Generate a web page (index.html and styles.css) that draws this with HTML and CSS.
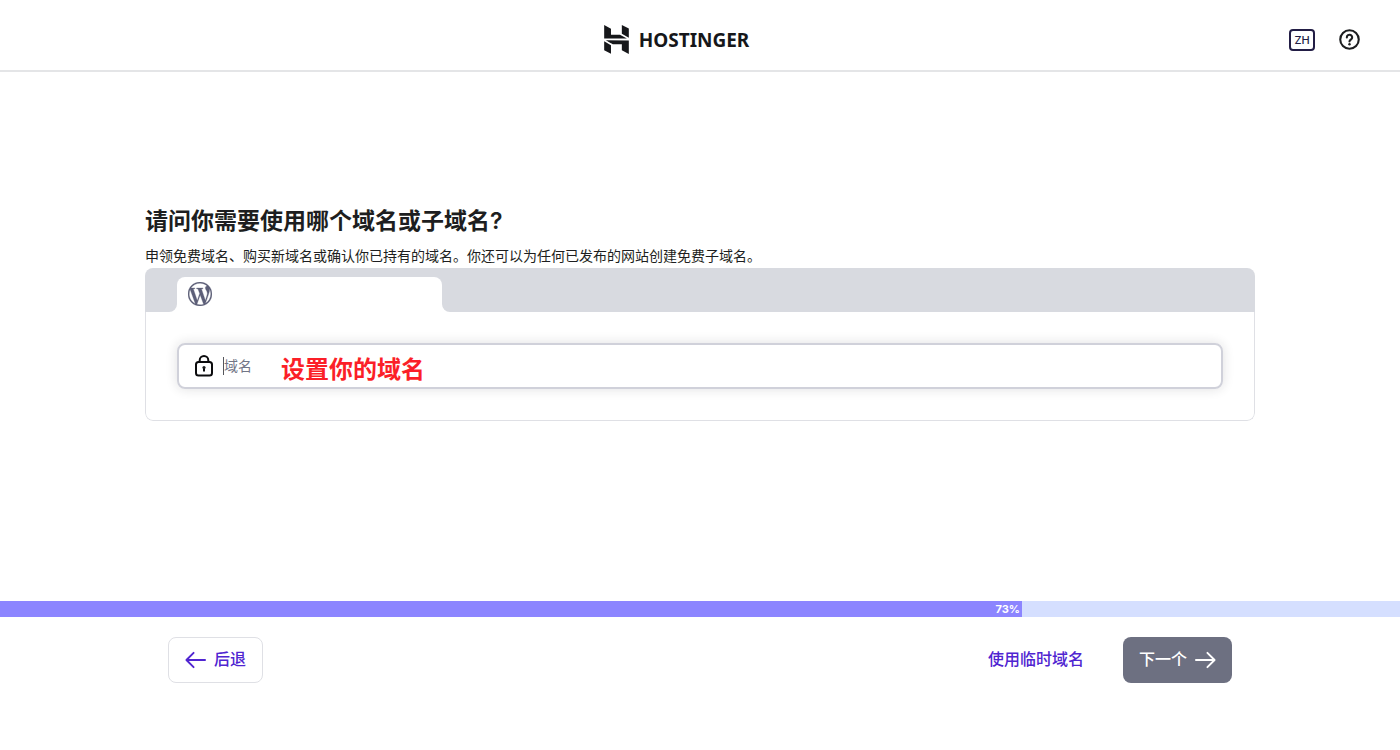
FILE: index.html
```html
<!DOCTYPE html>
<html lang="zh">
<head>
    <meta charset="UTF-8">
    <meta name="viewport" content="width=device-width, initial-scale=1.0">
    <title>Hostinger</title>
    <link rel="stylesheet" href="styles.css">
</head>
<body>
    <header class="header">
        <div class="header-logo">
            <a href="#" class="logo">
                <svg class="logo-mark" viewBox="1.8 0 20.4 24" aria-hidden="true">
                    <path d="M16.415 0v7.16l5.785 3.384V2.949L16.415 0ZM1.8 0v11.237h18.815L14.89 8.09l-7.457-.003V3.024L1.8 0Zm14.615 20.894v-5.019l-7.514-.005c.007.033-5.82-3.197-5.82-3.197l19.119.091V24l-5.785-3.106ZM1.8 13.551v7.343l5.633 2.949v-6.988L1.8 13.551Z"/>
                </svg>
                <span>HOSTINGER</span>
            </a>
        </div>
        <div class="header-tools">
            <button type="button" class="lang">ZH</button>
            <button type="button" class="help" aria-label="帮助">
                <svg viewBox="0 0 22 22" aria-hidden="true">
                    <circle cx="11" cy="11" r="9.7"/>
                    <path d="M8.2 8.8a2.8 2.7 0 1 1 4.5 2.1c-1 .8-1.7 1.2-1.7 2.2"/>
                    <circle class="dot" cx="11" cy="16" r="1.3"/>
                </svg>
            </button>
        </div>
    </header>

    <main class="main">
        <h1 class="title">请问你需要使用哪个域名或子域名?</h1>
        <p class="desc">申领免费域名、购买新域名或确认你已持有的域名。你还可以为任何已发布的网站创建免费子域名。</p>
        <div class="browser">
            <!-- tab bar -->
            <div class="tabs">
                <div class="tabs-left"></div>
                <div class="tab-wrap">
                    <div class="tab">
                        <svg class="wp" viewBox="0 0 24 24" aria-hidden="true">
                            <path d="M21.469 6.825c.84 1.537 1.318 3.3 1.318 5.175 0 3.979-2.156 7.456-5.363 9.325l3.295-9.527c.615-1.54.82-2.771.82-3.864 0-.405-.026-.78-.07-1.11m-7.981.105c.647-.03 1.232-.105 1.232-.105.582-.075.514-.93-.067-.899 0 0-1.755.135-2.88.135-1.064 0-2.85-.15-2.85-.15-.585-.03-.661.855-.075.885 0 0 .54.061 1.125.09l1.68 4.605-2.37 7.08L5.354 6.9c.649-.03 1.234-.1 1.234-.1.585-.075.516-.93-.065-.896 0 0-1.746.138-2.874.138-.2 0-.438-.008-.69-.015C4.911 3.15 8.235 1.215 12 1.215c2.809 0 5.365 1.072 7.286 2.833-.046-.003-.091-.009-.141-.009-1.06 0-1.812.923-1.812 1.914 0 .89.513 1.643 1.06 2.531.411.72.89 1.643.89 2.977 0 .915-.354 1.994-.821 3.479l-1.075 3.585-3.9-11.61.001.014zM12 22.784c-1.059 0-2.081-.153-3.048-.437l3.237-9.406 3.315 9.087c.024.053.05.101.078.149-1.12.393-2.325.609-3.582.609M1.211 12c0-1.564.336-3.05.935-4.39L7.29 21.709C3.694 19.96 1.212 16.271 1.211 12M12 0C5.385 0 0 5.385 0 12s5.385 12 12 12 12-5.385 12-12S18.615 0 12 0"/>
                        </svg>
                    </div>
                </div>
                <div class="tabs-right"></div>
            </div>
            <!-- address field -->
            <div class="browser-body">
                <div class="field">
                    <label for="domain" aria-label="域名">
                        <svg class="lock" viewBox="0 0 20 24" aria-hidden="true">
                            <rect x="2" y="8" width="16" height="13.5" rx="2.5"/>
                            <path d="M5.7 8V6.3a4.3 4.3 0 0 1 8.6 0V8"/>
                            <path d="M10 14v3.5"/>
                            <circle class="dot" cx="10" cy="13.6" r="1.6"/>
                        </svg>
                    </label>
                    <span class="caret"></span>
                    <input type="text" id="domain" class="domain" placeholder="域名">
                    <span class="note">设置你的域名</span>
                </div>
            </div>
        </div>
    </main>

    <footer class="footer">
        <div class="progress">
            <div class="progress-bar" style="width: 73%">73%</div>
        </div>
        <div class="actions">
            <button type="button" class="btn btn-back">
                <svg class="arrow" viewBox="0 0 22 20" aria-hidden="true"><path d="M21 10H2M9 2.5L1.5 10L9 17.5"/></svg>
                <span class="btn-text">后退</span>
            </button>
            <div class="actions-right">
                <a href="#" class="temp-link btn-text">使用临时域名</a>
                <button type="button" class="btn btn-next">
                    <span class="btn-text">下一个</span>
                    <svg class="arrow" viewBox="0 0 22 20" aria-hidden="true"><path d="M1 10H20M13 2.5L20.5 10L13 17.5"/></svg>
                </button>
            </div>
        </div>
    </footer>
</body>
</html>
```
FILE: styles.css
```css
*{
    box-sizing: border-box;
}
body{
    display: flex;
    flex-direction: column;
    min-height: 100vh;
    margin: 0;
    background-color: #fff;
    color: #1d1e20;
    font-family: Inter, "Noto Sans CJK SC", sans-serif;
}
button, input{
    font-family: inherit;
}
svg{
    display: block;
}
.header{
    display: flex;
    align-items: center;
    height: 72px;
    padding: 9px 40px 0 64px;
    border-bottom: 2px solid #e4e5e7;
}
.header-logo{
    display: flex;
    flex: 1;
    justify-content: center;
}
.logo{
    display: flex;
    align-items: center;
    gap: 10px;
    color: #16171a;
    font: 700 19px/30px "Noto Sans", sans-serif;
    text-decoration: none;
}
.logo-mark{
    width: 25px;
    height: 29px;
    fill: #16171a;
}
.header-tools{
    display: flex;
    align-items: center;
    gap: 24px;
}
.lang{
    width: 26px;
    height: 22px;
    padding: 0;
    border: 2px solid #221d45;
    border-radius: 4px;
    background: none;
    color: #221d45;
    font-size: 11px;
    font-weight: 500;
    line-height: 18px;
}
.help{
    padding: 0;
    border: 0;
    background: none;
}
.help svg{
    width: 21px;
    height: 21px;
    fill: none;
    stroke: #1d1e20;
    stroke-width: 2.2;
    stroke-linecap: round;
}
svg .dot{
    fill: #1d1e20;
    stroke: none;
}
.main{
    flex: 1;
    width: 100%;
    max-width: 1110px;
    margin: 0 auto;
    padding: 133px 0 40px;
}
.title{
    margin: 0;
    font-size: 23px;
    font-weight: 600;
    line-height: 32px;
}
.desc{
    margin: 7px 0 0;
    font-size: 14px;
    line-height: 24px;
}
.browser{
    border-radius: 8px;
    overflow: hidden;
}
.tabs{
    display: flex;
    height: 44px;
}
.tabs-left,
.tabs-right{
    background-color: #d8dae0;
}
.tabs-left{
    width: 32px;
    border-bottom-right-radius: 8px;
}
.tabs-right{
    flex: 1;
    border-bottom-left-radius: 8px;
}
.tab-wrap{
    width: 265px;
    height: 24px;
    padding-top: 9px;
    background-color: #d8dae0;
}
.tab{
    height: 35px;
    padding: 5px 11px;
    border-radius: 8px 8px 0 0;
    background-color: #fff;
}
.wp{
    width: 24px;
    height: 24px;
    fill: #5d5f78;
    stroke: #5d5f78;
    stroke-width: 0.3;
}
.browser-body{
    padding: 31px;
    border: 1px solid #dfe0e5;
    border-top: 0;
    border-radius: 0 0 8px 8px;
}
.field{
    position: relative;
    display: flex;
    align-items: center;
    height: 46px;
    padding: 0 16px 0 14px;
    border: 2px solid #d0d1da;
    border-radius: 8px;
    box-shadow: 0 0 12px rgba(29, 30, 32, 0.14);
}
.lock{
    width: 22px;
    height: 24px;
    fill: none;
    stroke: #0c0c0e;
    stroke-width: 2;
}
.caret{
    width: 1px;
    height: 18px;
    margin-left: 8px;
    background-color: #55565c;
}
.domain{
    flex: 1;
    min-width: 0;
    padding: 0;
    border: 0;
    outline: none;
    background: none;
    font-size: 14px;
    line-height: 24px;
}
.domain::placeholder{
    color: #727586;
}
/* red hint lies over the input */
.note{
    position: absolute;
    top: 7px;
    left: 102px;
    color: #fb1f28;
    font-size: 24px;
    font-weight: 700;
    line-height: 36px;
    pointer-events: none;
}
.progress{
    height: 16px;
    background-color: #d5dfff;
}
.progress-bar{
    height: 16px;
    padding-right: 2px;
    background-color: #8c85ff;
    color: #fff;
    font-size: 11px;
    font-weight: 700;
    line-height: 16px;
    text-align: right;
}
.actions{
    display: flex;
    align-items: center;
    justify-content: space-between;
    width: 100%;
    max-width: 1064px;
    margin: 0 auto;
    padding: 20px 0 67px;
}
.actions-right{
    display: flex;
    align-items: center;
    gap: 39px;
}
.btn{
    display: flex;
    align-items: center;
    gap: 8px;
    height: 46px;
    padding: 0 16px;
    border: 0;
    border-radius: 8px;
}
.btn-text{
    padding-bottom: 2px;
    font-size: 16px;
    font-weight: 500;
    line-height: 24px;
}
.btn-back{
    border: 1px solid #dfe0e5;
    background-color: #fff;
    color: #5025d1;
}
.btn-next{
    background-color: #6d7081;
    color: #fff;
}
.arrow{
    width: 21px;
    height: 20px;
    fill: none;
    stroke: currentColor;
    stroke-width: 2;
    stroke-linecap: round;
    stroke-linejoin: round;
}
.temp-link{
    color: #5025d1;
    text-decoration: none;
}
```
